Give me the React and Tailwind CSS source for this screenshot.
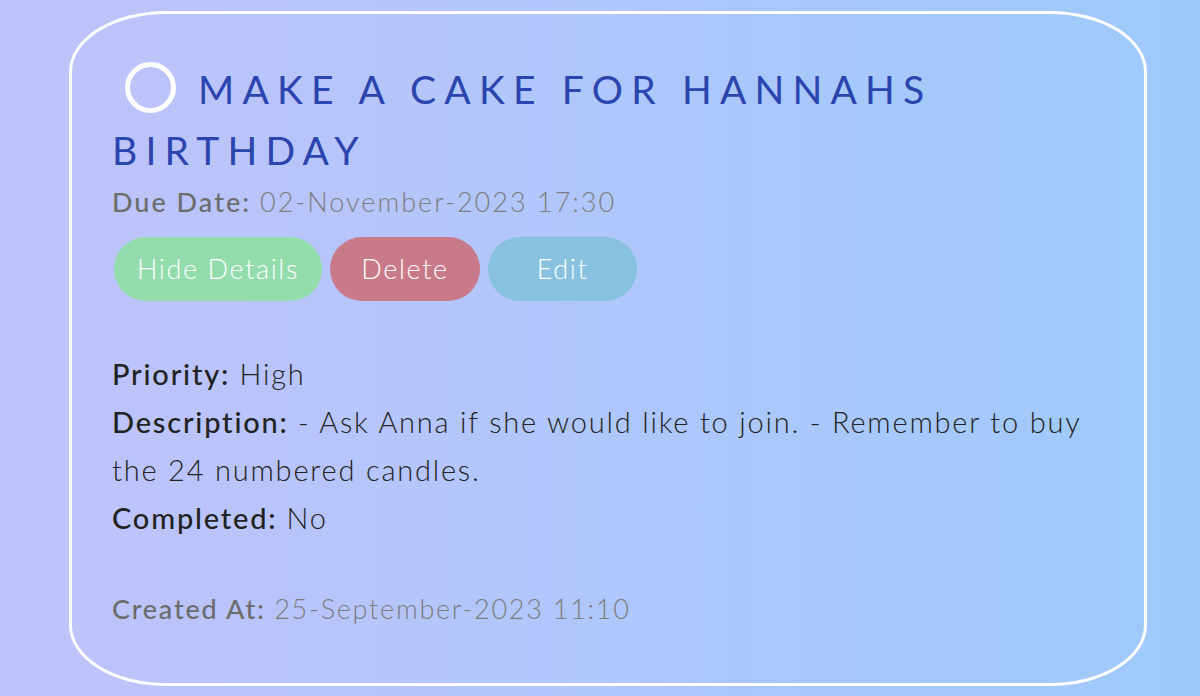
export default function App() {
  const font = { fontFamily: "Lato, 'Open Sans', sans-serif" };
  return (
    <div
      className="w-[1200px] h-[696px] overflow-hidden bg-gradient-to-r from-[#c0c3fa] to-[#9dcafa] pt-[11px] pl-[69px]"
      style={font}
    >
      <div className="w-[1078px] h-[675px] border-[3px] border-white rounded-[9%] pl-[40px] pr-[40px] pt-[45px]">
        <h1 className="text-[39px] leading-[61px] tracking-[0.21em] text-[#2b45ae] font-normal uppercase">
          <span className="inline-block align-[-9px] ml-[13px] mr-[22px] w-[51px] h-[51px] rounded-full border-[5px] border-white"></span>
          Make a cake for Hannahs Birthday
        </h1>
        <p className="text-[27px] leading-[38px] mt-[2px] tracking-[0.075em] text-[#7d7d7d]">
          <span className="font-medium text-[#6c6c6c]">Due Date:</span>{" "}
          <span className="font-light">02-November-2023 17:30</span>
        </p>
        <div className="flex gap-[8px] mt-[16px] ml-[2px]">
          <button className="w-[208px] h-[64px] rounded-full bg-[#93dcab] text-white text-[27px] tracking-[0.06em] font-light">
            Hide Details
          </button>
          <button className="w-[150px] h-[64px] rounded-full bg-[#c97a8a] text-white text-[27px] tracking-[0.06em] font-light">
            Delete
          </button>
          <button className="w-[149px] h-[64px] rounded-full bg-[#88c2df] text-white text-[27px] tracking-[0.06em] font-light">
            Edit
          </button>
        </div>
        <div className="mt-[49px] text-[29px] leading-[48px] tracking-[0.062em] text-[#222]">
          <p>
            <span className="font-medium">Priority:</span>{" "}
            <span className="font-light">High</span>
          </p>
          <p>
            <span className="font-medium">Description:</span>{" "}
            <span className="font-light">
              - Ask Anna if she would like to join. - Remember to buy the 24 numbered candles.
            </span>
          </p>
          <p>
            <span className="font-medium">Completed:</span>{" "}
            <span className="font-light">No</span>
          </p>
        </div>
        <p className="mt-[48px] text-[27px] leading-[38px] tracking-[0.065em] text-[#7d7d7d]">
          <span className="font-medium text-[#6c6c6c]">Created At:</span>{" "}
          <span className="font-light">25-September-2023 11:10</span>
        </p>
      </div>
    </div>
  );
}
